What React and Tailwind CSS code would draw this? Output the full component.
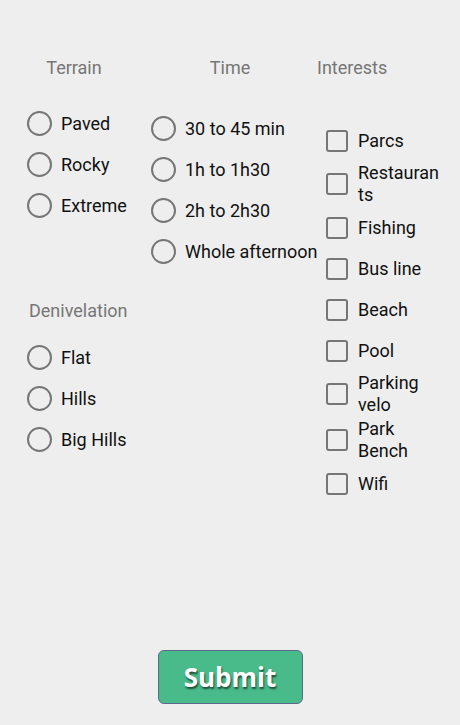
import React, { useState } from "react";

const terrain = ["Paved", "Rocky", "Extreme"];
const times = ["30 to 45 min", "1h to 1h30", "2h to 2h30", "Whole afternoon"];
const denivelation = ["Flat", "Hills", "Big Hills"];
const interests = [
  "Restaurants",
  "Fishing",
  "Bus line",
  "Beach",
  "Pool",
  "Parking velo",
  "Park Bench",
  "Wifi",
];

function Radio({ label, checked, onClick }) {
  return (
    <div className="flex items-center h-[41px] gap-[9px] cursor-pointer" onClick={onClick}>
      <span className="w-[25px] h-[25px] shrink-0 rounded-full border-2 border-[#767676] flex items-center justify-center">
        {checked && <span className="w-[13px] h-[13px] rounded-full bg-[#767676]" />}
      </span>
      <span className="text-[18px] leading-[21px] text-[#111] whitespace-nowrap">{label}</span>
    </div>
  );
}

function Check({ label, checked, onClick }) {
  return (
    <div className="flex items-center min-h-[41px] py-[1px] gap-[10px] cursor-pointer" onClick={onClick}>
      <span className="w-[22px] h-[22px] shrink-0 rounded-[3px] border-2 border-[#767676] flex items-center justify-center text-[#767676] text-[14px] leading-none">
        {checked && "✓"}
      </span>
      <span className="w-[84px] text-[18px] leading-[22px] text-[#111] break-words">{label}</span>
    </div>
  );
}

function Header({ children, className }) {
  return <div className={"h-[20px] text-[18px] leading-[20px] text-[#767676] whitespace-nowrap " + className}>{children}</div>;
}

export default function App() {
  const [ter, setTer] = useState(null);
  const [time, setTime] = useState(null);
  const [den, setDen] = useState(null);
  const [picked, setPicked] = useState({});

  const toggle = (k) => setPicked((p) => ({ ...p, [k]: !p[k] }));

  return (
    <div className="min-h-[725px] bg-[#eeeeee] flex flex-col font-['Roboto',sans-serif]">
      <div className="flex pt-[58px]">
        {/* colonne 1 : terrain + dénivelé */}
        <div className="w-[124px] pl-[27px] shrink-0">
          <Header className="w-[94px] text-center">Terrain</Header>
          <div className="mt-[25px]">
            {terrain.map((t) => (
              <Radio key={t} label={t} checked={ter === t} onClick={() => setTer(t)} />
            ))}
          </div>
          <Header className="mt-[75px] pl-[2px]">Denivelation</Header>
          <div className="mt-[16px]">
            {denivelation.map((d) => (
              <Radio key={d} label={d} checked={den === d} onClick={() => setDen(d)} />
            ))}
          </div>
        </div>

        {/* colonne 2 : durée */}
        <div className="w-[193px] pl-[27px] shrink-0">
          <Header className="w-[158px] text-center">Time</Header>
          <div className="mt-[30px]">
            {times.map((t) => (
              <Radio key={t} label={t} checked={time === t} onClick={() => setTime(t)} />
            ))}
          </div>
        </div>

        {/* colonne 3 : intérêts */}
        <div className="flex-1">
          <Header>Interests</Header>
          <div className="mt-[42px] pl-[9px]">
            <Check label="Parcs" checked={!!picked.Parcs} onClick={() => toggle("Parcs")} />
            {interests.map((i) => (
              <Check key={i} label={i} checked={!!picked[i]} onClick={() => toggle(i)} />
            ))}
          </div>
        </div>
      </div>

      <div className="flex-1" />
      <div className="flex justify-center pb-[21px]">
        <button className="w-[145px] h-[54px] rounded-[6px] bg-[#49bb8a] border-[1.5px] border-[#5b6a8c] text-white text-[26px] font-bold font-['Open_Sans',sans-serif] [text-shadow:1px_2px_2px_rgba(0,0,0,0.6)]">
          Submit
        </button>
      </div>
    </div>
  );
}
